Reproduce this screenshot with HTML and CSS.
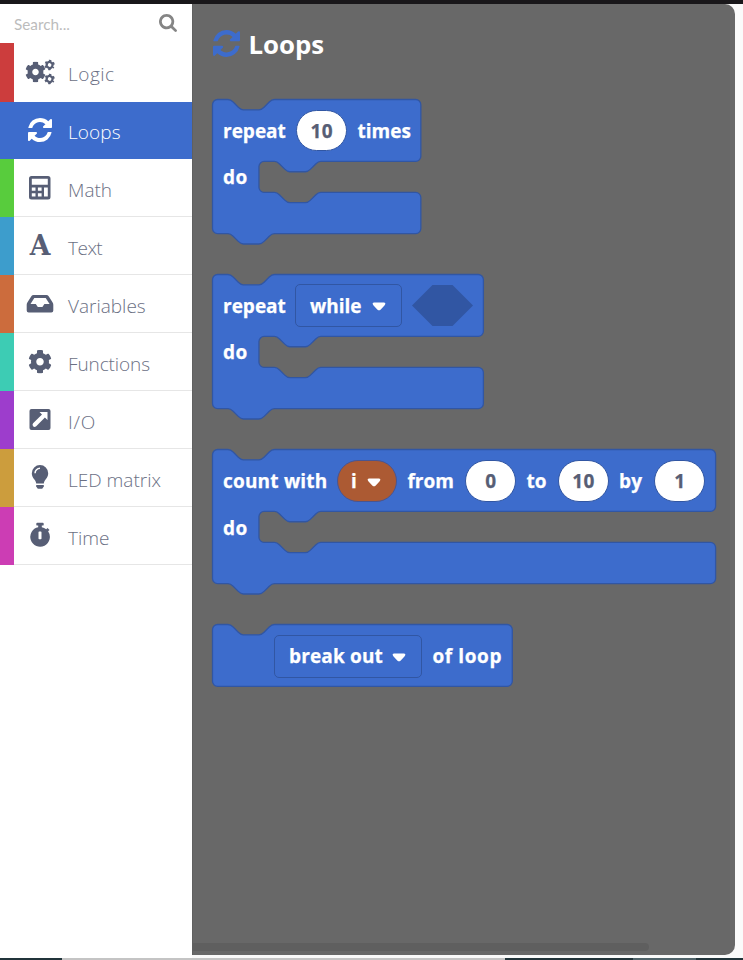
FILE: index.html
```html
<!DOCTYPE html>
<html lang="en">
<head>
<meta charset="utf-8">
<title>Loops</title>
<link rel="stylesheet" href="styles.css">
</head>
<body>
<svg class="defs" aria-hidden="true">
  <symbol id="sync" viewBox="0 0 1536 1536"><path d="M1511 928q0 5-1 7-64 268-268 434.500t-478 166.500q-146 0-282.500-55t-243.500-157l-129 129q-19 19-45 19t-45-19-19-45v-448q0-26 19-45t45-19h448q26 0 45 19t19 45-19 45l-137 137q71 66 161 102t187 36q134 0 250-65t186-179q11-17 53-117 8-23 30-23h192q13 0 22.500 9.500t9.500 22.500zM1536 128v448q0 26-19 45t-45 19h-448q-26 0-45-19t-19-45 19-45l138-138q-148-137-349-137-134 0-250 65t-186 179q-11 17-53 117-8 23-30 23h-199q-13 0-22.500-9.500t-9.500-22.500v-7q65-268 270-434.500t480-166.500q146 0 284 55.500t245 156.500l130-129q19-19 45-19t45 19 19 45z"/></symbol>
  <symbol id="cog" viewBox="0 0 512 512"><path d="M487.400 315.700l-42.600-24.600c4.300-23.200 4.300-47 0-70.200l42.600-24.600c4.900-2.800 7.100-8.600 5.500-14-11.100-35.600-30-67.800-54.700-94.600-3.800-4.100-10-5.100-14.800-2.300L380.800 110c-17.900-15.400-38.500-27.300-60.800-35.100V25.800c0-5.600-3.900-10.500-9.400-11.700-36.700-8.200-74.300-7.800-109.200 0-5.500 1.200-9.400 6.100-9.400 11.700V75c-22.200 7.900-42.800 19.800-60.800 35.100L88.700 85.500c-4.900-2.800-11-1.900-14.800 2.300-24.700 26.700-43.600 58.900-54.700 94.600-1.700 5.400.6 11.200 5.500 14L67.300 221c-4.300 23.200-4.300 47 0 70.200l-42.600 24.600c-4.900 2.800-7.100 8.600-5.500 14 11.100 35.600 30 67.800 54.700 94.600 3.800 4.100 10 5.100 14.800 2.300l42.600-24.600c17.900 15.400 38.500 27.300 60.800 35.100v49.200c0 5.600 3.900 10.500 9.400 11.700 36.700 8.200 74.300 7.800 109.200 0 5.500-1.200 9.400-6.100 9.400-11.700v-49.200c22.200-7.900 42.800-19.800 60.800-35.100l42.600 24.600c4.900 2.800 11 1.900 14.800-2.300 24.700-26.700 43.600-58.900 54.700-94.600 1.500-5.500-.7-11.300-5.600-14.100zM256 336c-44.100 0-80-35.900-80-80s35.900-80 80-80 80 35.900 80 80-35.900 80-80 80z"/></symbol>
  <symbol id="caret" viewBox="0 0 14 9"><path d="M2 .5h10q1.800 0 1.300 1.500-.3 1-1.300 2L8.500 7.700q-1.500 1.300-3 0L2 4Q1 3 .7 2 .2.500 2 .5z"/></symbol>
</svg>
<div class="topbar"></div>
<div class="app">
  <nav class="toolbox">
    <div class="search"><span>Search...</span>
      <svg viewBox="64 128 1664 1664"><path d="M1216 832q0-185-131.500-316.500t-316.500-131.500-316.500 131.500-131.500 316.500 131.500 316.500 316.500 131.500 316.500-131.500 131.500-316.500zM1728 1664q0 52-38 90t-90 38q-54 0-90-38l-343-342q-179 124-399 124-143 0-273.500-55.500t-225-150-150-225-55.500-273.500 55.500-273.500 150-225 225-150 273.500-55.500 273.500 55.500 225 150 150 225 55.500 273.500q0 220-124 399l343 343q37 37 37 90z"/></svg>
    </div>
    <div class="row logic"><svg viewBox="0 0 32 28"><use href="#cog" x="1" y="3.500" width="21" height="21"/><g transform="rotate(30 25.600 7)"><circle cx="25.600" cy="7" r="2.900" class="ring"/><circle cx="25.600" cy="7" r="4.300" class="teeth"/></g><g transform="rotate(30 25.600 21)"><circle cx="25.600" cy="21" r="2.900" class="ring"/><circle cx="25.600" cy="21" r="4.300" class="teeth"/></g></svg><span class="w-logic">Logic</span></div>
    <div class="row loops active"><svg viewBox="0 0 32 28"><use href="#sync" x="4" y="2" width="24" height="24"/></svg><span class="w-loops">Loops</span></div>
    <div class="row math"><svg viewBox="0 0 32 28"><path fill-rule="evenodd" d="M7.500 2h16.500a2.500 2.500 0 0 1 2.500 2.500v18.500a2.500 2.500 0 0 1-2.500 2.500h-16.500a2.500 2.500 0 0 1-2.500-2.500V4.500a2.500 2.500 0 0 1 2.500-2.500zM7.800 4.800v6h16v-6zM7.800 13.500v3.300h3.700v-3.300zM13.900 13.500v3.300h3.700v-3.300zM7.800 19.300v3.300h3.700v-3.300zM13.900 19.300v3.300h3.700v-3.300zM20 13.500v9.100h3.800v-9.100z"/></svg><span class="w-math">Math</span></div>
    <div class="row text"><b class="letter">A</b><span class="w-text">Text</span></div>
    <div class="row vars"><svg viewBox="0 0 32 28"><path fill-rule="evenodd" d="M9.500 5h13q1.300 0 2 1.100l4 6.200q.8 1.200.8 2.500v5.700q0 2-2 2H4.700q-2 0-2-2v-5.700q0-1.300.8-2.500l4-6.200Q8.200 5 9.500 5zM10.300 8l-3.800 6h5.300l2 3h4.600l2-3h5.200l-3.900-6z"/></svg><span class="w-vars">Variables</span></div>
    <div class="row funcs"><svg viewBox="0 0 32 28"><use href="#cog" x="4" y="1.700" width="24" height="24"/></svg><span class="w-funcs">Functions</span></div>
    <div class="row io"><svg viewBox="0 0 32 28"><rect x="5.500" y="3" width="21" height="21" rx="2"/><path fill="#fff" d="M15.500 6h8v8l-2.600-2.500-8.700 8.800q-1.700 1.300-3.100 0-1.200-1.500 0-3.100L18 8.500z"/></svg><span class="w-io">I/O</span></div>
    <div class="row led"><svg viewBox="0 0 32 28"><path fill-rule="evenodd" d="M16 1a8.200 8.200 0 0 1 8.200 8.200c0 2.500-1 4.200-2.400 6-1.200 1.500-1.700 2.600-2 4.300h-7.600c-.3-1.700-.8-2.800-2-4.300-1.400-1.800-2.400-3.500-2.400-6A8.200 8.200 0 0 1 16 1zM16 3.500a5.700 5.700 0 0 0-5.700 5.700h1.500A4.200 4.200 0 0 1 16 5z"/><path d="M12.200 21h7.600v1.500l-1.600 2.200h-4.400l-1.600-2.200z"/></svg><span class="w-led">LED matrix</span></div>
    <div class="row time"><svg viewBox="0 0 32 28"><path fill-rule="evenodd" d="M13.300.7h5.400q1 0 1 1v1q0 .9-1 .9h-.9v1.700q2.400.4 4.400 1.900l1.300-1.300 2 2-1.400 1.400a9.800 9.800 0 1 1-9.900-4V3.600h-.9q-1 0-1-.9v-1q0-1 1-1zM15.200 9.500q-.7 0-.7.800v6.200q0 .8.700.8h1.600q.7 0 .7-.8v-6.200q0-.8-.7-.8z"/></svg><span class="w-time">Time</span></div>
  </nav>
  <main class="flyout">
    <h1><svg><use href="#sync"/></svg><span>Loops</span></h1>

    <section class="block b1">
      <svg class="shape"><path d="M0 4a4 4 0 0 1 4-4H12c2 0 3 1 4 2l4 4c1 1 2 2 4 2h12c2 0 3-1 4-2l4-4c1-1 2-2 4-2H157.500a4 4 0 0 1 4 4V44a4 4 0 0 1-4 4H84c-2 0-3 1-4 2l-4 4c-1 1-2 2-4 2h-12c-2 0-3-1-4-2l-4-4c-1-1-2-2-4-2h-8a4 4 0 0 0-4 4V68a4 4 0 0 0 4 4h8c2 0 3 1 4 2l4 4c1 1 2 2 4 2h12c2 0 3-1 4-2l4-4c1-1 2-2 4-2H157.500a4 4 0 0 1 4 4V100a4 4 0 0 1-4 4H48c-2 0-3 1-4 2l-4 4c-1 1-2 2-4 2h-12c-2 0-3-1-4-2l-4-4c-1-1-2-2-4-2H4a4 4 0 0 1-4-4z"/></svg>
      <div class="line"><span>repeat</span><span class="num">10</span><span>times</span></div>
      <div class="do">do</div>
    </section>

    <section class="block b2">
      <svg class="shape"><path d="M0 4a4 4 0 0 1 4-4H12c2 0 3 1 4 2l4 4c1 1 2 2 4 2h12c2 0 3-1 4-2l4-4c1-1 2-2 4-2H206a4 4 0 0 1 4 4V44a4 4 0 0 1-4 4H84c-2 0-3 1-4 2l-4 4c-1 1-2 2-4 2h-12c-2 0-3-1-4-2l-4-4c-1-1-2-2-4-2h-8a4 4 0 0 0-4 4V68a4 4 0 0 0 4 4h8c2 0 3 1 4 2l4 4c1 1 2 2 4 2h12c2 0 3-1 4-2l4-4c1-1 2-2 4-2H206a4 4 0 0 1 4 4V100a4 4 0 0 1-4 4H48c-2 0-3 1-4 2l-4 4c-1 1-2 2-4 2h-12c-2 0-3-1-4-2l-4-4c-1-1-2-2-4-2H4a4 4 0 0 1-4-4z"/></svg>
      <div class="line"><span>repeat</span><span class="select"><span>while</span><svg><use href="#caret"/></svg></span><svg class="hex" viewBox="0 0 61 41"><path d="M0 20.500L20.500 0h20L61 20.500 40.500 41h-20z"/></svg></div>
      <div class="do">do</div>
    </section>

    <section class="block b3">
      <svg class="shape"><path d="M0 4a4 4 0 0 1 4-4H12c2 0 3 1 4 2l4 4c1 1 2 2 4 2h12c2 0 3-1 4-2l4-4c1-1 2-2 4-2H386a4 4 0 0 1 4 4V44a4 4 0 0 1-4 4H84c-2 0-3 1-4 2l-4 4c-1 1-2 2-4 2h-12c-2 0-3-1-4-2l-4-4c-1-1-2-2-4-2h-8a4 4 0 0 0-4 4V68a4 4 0 0 0 4 4h8c2 0 3 1 4 2l4 4c1 1 2 2 4 2h12c2 0 3-1 4-2l4-4c1-1 2-2 4-2H386a4 4 0 0 1 4 4V100a4 4 0 0 1-4 4H48c-2 0-3 1-4 2l-4 4c-1 1-2 2-4 2h-12c-2 0-3-1-4-2l-4-4c-1-1-2-2-4-2H4a4 4 0 0 1-4-4z"/></svg>
      <div class="line"><span class="count">count with</span><span class="variable"><span>i</span><svg><use href="#caret"/></svg></span><span>from</span><span class="num">0</span><span>to</span><span class="num">10</span><span class="by">by</span><span class="num">1</span></div>
      <div class="do">do</div>
    </section>

    <section class="block b4">
      <svg class="shape"><path d="M0 4a4 4 0 0 1 4-4H12c2 0 3 1 4 2l4 4c1 1 2 2 4 2h12c2 0 3-1 4-2l4-4c1-1 2-2 4-2H228.400a4 4 0 0 1 4 4V44a4 4 0 0 1-4 4H4a4 4 0 0 1-4-4z"/></svg>
      <div class="line"><span class="select"><span>break out</span><svg><use href="#caret"/></svg></span><span class="of">of loop</span></div>
    </section>
    <div class="scroll"></div>
  </main>
</div>
<footer><i></i><i></i><i></i><i></i><i></i></footer>
</body>
</html>
```
FILE: styles.css
```css
* { box-sizing: border-box; }
body {
  margin: 0;
  width: 743px;
  height: 960px;
  overflow: hidden;
  display: flex;
  flex-direction: column;
  background: #fafafa;
  font-family: "Open Sans", "Noto Sans", sans-serif;
}
.defs { position: absolute; width: 0; height: 0; }
.topbar { height: 4px; background: #19171a; }
.app { height: 951px; display: flex; }

/* Category list */
.toolbox { width: 192px; background: #fff; height: 954px; }
.search {
  height: 39px;
  display: flex;
  justify-content: space-between;
  padding: 10px 15px 0 14px;
  font: 15.300px/20px Lato, sans-serif;
  color: #bcbcbc;
}
.search svg { width: 18px; height: 18px; fill: #858585; }
.row {
  height: 58px;
  display: flex;
  align-items: center;
  padding: 0 0 1px 9.500px;
  border-left: 14px solid;
  box-shadow: inset 0 -1px #e6e6e6;
  color: #575e75;
}
.row > svg { width: 32px; height: 28px; fill: #575e75; flex: none; }
.row > span {
  margin: 4px 0 0 12.500px;
  font-size: 19px;
  line-height: 26px;
  font-weight: 300;
  color: #6b7084;
  white-space: nowrap;
}
.ring { fill: none; stroke: #575e75; stroke-width: 2.200; }
.teeth { fill: none; stroke: #575e75; stroke-width: 1.800; stroke-dasharray: 2.250 2.253; stroke-dashoffset: 1.120; }
.letter {
  width: 32px;
  text-align: center;
  font: bold 28px/28px "DejaVu Serif", serif;
  transform: scaleX(.95);
}
.row .w-logic { letter-spacing: .5px; }
.row .w-loops { letter-spacing: .1px; }
.row .w-text { letter-spacing: -.5px; }
.row .w-funcs { letter-spacing: -.1px; }
.row .w-io { letter-spacing: .8px; }
.logic { height: 59px; border-left-color: #cc3d3d; box-shadow: none; }
.loops { height: 57px; border-left-color: #3d6ccc; }
.math { border-left-color: #58cc3d; }
.text { border-left-color: #3d9dcc; }
.vars { border-left-color: #cc6c3d; }
.funcs { border-left-color: #3dccb4; }
.io { border-left-color: #9d3dcc; }
.led { border-left-color: #cc9d3d; }
.time { border-left-color: #cc3db4; }
.row.active { background: #3d6ccc; box-shadow: none; }
.row.active > svg { fill: #fff; }
.row.active > span { color: #fff; }

/* Block palette */
.flyout {
  width: 543px;
  height: 951px;
  padding: 24px 0 0 19.500px;
  background: #686868;
  border-left: 1px solid #606060;
  border-radius: 0 10px 10px 0;
  display: flex;
  flex-direction: column;
}
h1 {
  margin: 0;
  height: 71.500px;
  display: flex;
  font-size: 25.800px;
  line-height: 33px;
  color: #fff;
}
h1 svg { width: 27px; height: 27px; margin: 2px 9px 0 0; fill: #3d6ccc; }
.block {
  position: relative;
  height: 175.300px;
  color: #fff;
  font-size: 19px;
  line-height: 26px;
  font-weight: 700;
  white-space: nowrap;
  -webkit-text-stroke: .25px;
}
.shape {
  position: absolute;
  left: 0;
  top: 0;
  width: 1px;
  height: 1px;
  overflow: visible;
}
.shape path {
  transform: translate(-.5px, -.5px) scale(1.29);
  fill: #3d6ccc;
  stroke: #3156a3;
  stroke-width: 1;
}
.line {
  position: relative;
  height: 62px;
  padding-left: 10.500px;
  display: grid;
  align-items: center;
  column-gap: 10.500px;
}
.b1 .line { grid-template-columns: 62px 51.500px 53px; }
.b2 .line { grid-template-columns: 61.500px 106.500px 61px; }
.b3 .line { grid-template-columns: 103.500px 60px 47px 51px 20.500px 51px 24.500px 51px; }
.b4 .line { grid-template-columns: 148px 70px; padding-left: 61.500px; }
.count { letter-spacing: .2px; }
.by { letter-spacing: .3px; }
.of { letter-spacing: .6px; }
.b4 .select > span { letter-spacing: .15px; }
.do { position: relative; margin: 2.500px 0 0 10.500px; letter-spacing: .5px; }
.num {
  height: 41.500px;
  border: 1px solid #3156a3;
  border-radius: 21px;
  background: #fff;
  color: #575e75;
  display: flex;
  align-items: center;
  justify-content: center;
  padding-left: 1px;
  letter-spacing: .5px;
}
.select {
  height: 43px;
  border: 1px solid #3156a3;
  border-radius: 5px;
  padding: 0 15px 0 14px;
  display: flex;
  align-items: center;
  justify-content: space-between;
}
.variable {
  height: 42px;
  border: 1px solid #4a5590;
  border-radius: 21px;
  background: #ac5a33;
  padding: 0 15px 0 13px;
  display: flex;
  align-items: center;
  justify-content: space-between;
}
.select svg, .variable svg { width: 14px; height: 9px; fill: #fff; margin-top: 2px; }
.hex { width: 61px; height: 41px; fill: #3156a3; margin-top: -1px; }
.scroll {
  margin: auto 0 4px -19.500px;
  width: 456px;
  height: 8px;
  background: #5f5f5f;
  border-radius: 0 4px 4px 0;
}
footer {
  margin-top: 3px;
  height: 2px;
  display: grid;
  grid-template-columns: 62px 443px 128px 63px 47px;
}
footer i { background: #21343a; }
footer i:nth-child(2) { background: #c4c4c4; }
footer i:nth-child(4) { background: #50646a; }
```
